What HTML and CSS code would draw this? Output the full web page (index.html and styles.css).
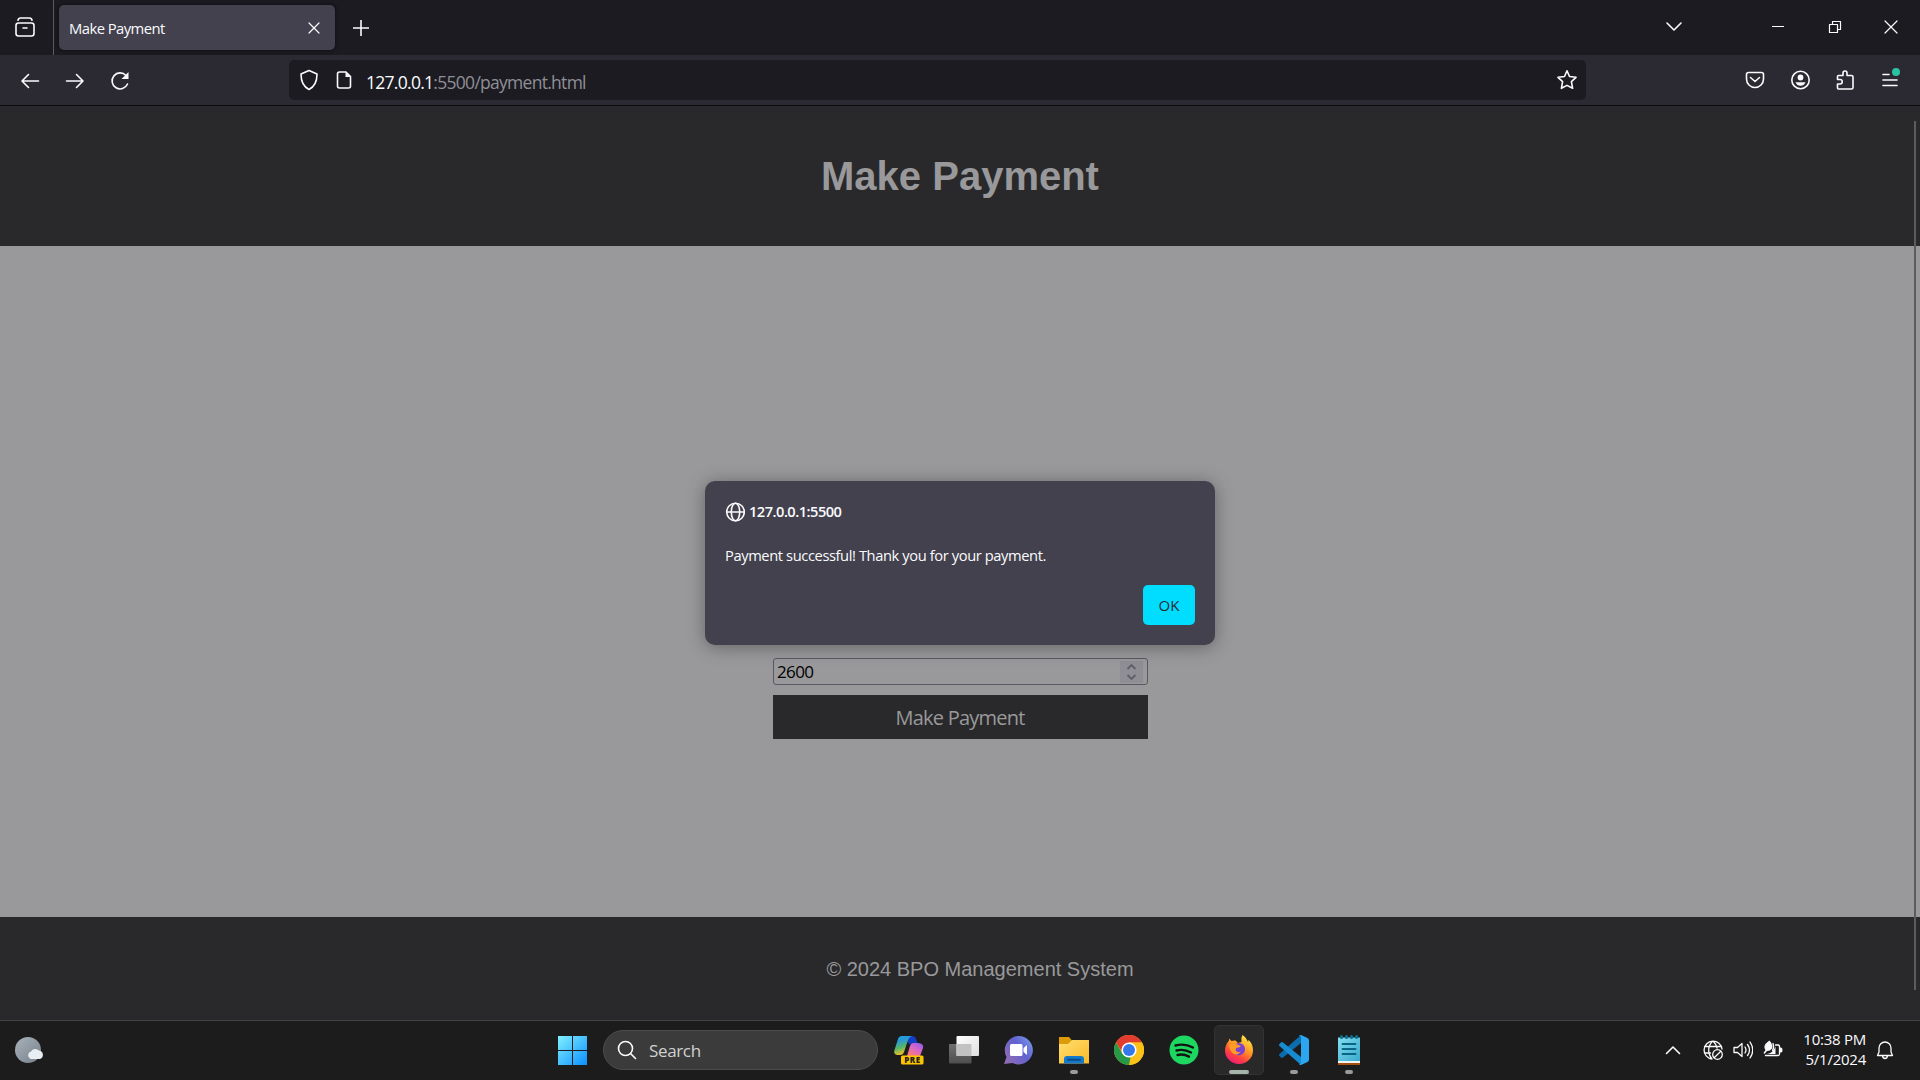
FILE: index.html
```html
<!DOCTYPE html>
<html lang="en">
<head>
<meta charset="utf-8">
<title>Make Payment</title>
<link rel="stylesheet" href="styles.css">
</head>
<body>
<div class="tabstrip">
  <div class="view-button"><svg class="ico" width="20" height="20" viewBox="0 0 20 20"><rect x="1" y="6" width="18" height="13" rx="2.500"/><path d="M3 3.200Q3.500 1 5.500 1h9Q16.500 1 17 3.200M8 11h4"/></svg></div>
  <div class="tab"><span class="tab-title">Make Payment</span><svg class="ico thin" width="12" height="12" viewBox="0 0 12 12"><path d="M1 1l10 10M11 1L1 11"/></svg></div>
  <svg class="ico new-tab" width="16" height="16" viewBox="0 0 16 16"><path d="M8 .5v15M.5 8h15"/></svg>
  <div class="window-controls">
    <svg class="ico" width="18" height="12" viewBox="0 0 18 12"><path d="M2 2l7 7 7-7"/></svg>
    <svg class="ico thin" width="12" height="14" viewBox="0 0 12 14"><path d="M0 6.500h12"/></svg>
    <svg class="ico thin" width="14" height="14" viewBox="0 0 14 14"><path d="M1.500 4.500h8v8h-8zM4.500 4V1.500h8v8H10"/></svg>
    <svg class="ico thin" width="14" height="14" viewBox="0 0 14 14"><path d="M1 1l12 12M13 1L1 13"/></svg>
  </div>
</div>
<div class="navbar">
  <div class="nav-buttons">
    <svg class="ico" width="20" height="20" viewBox="0 0 20 20"><path d="M18.500 10H2M8.500 3.500L2 10l6.500 6.500"/></svg>
    <svg class="ico" width="20" height="20" viewBox="0 0 20 20"><path d="M1.500 10H18M11.500 3.500L18 10l-6.500 6.500"/></svg>
    <svg class="ico" width="20" height="20" viewBox="0 0 20 20"><path d="M17.500 13A8 8 0 1 1 16 4.500"/><path class="solid" d="M18.500 1v7h-7z"/></svg>
  </div>
  <div class="urlbar">
    <svg class="ico" width="20" height="22" viewBox="0 0 20 22"><path d="M10 1.500l8 3.500c0 7-2 12.500-8 15.500C4 17.500 2 12 2 5z"/></svg>
    <svg class="ico" width="16" height="20" viewBox="0 0 16 20"><path d="M10 2H3.500Q1.500 2 1.500 4v12q0 2 2 2h9q2 0 2-2V6.500z"/><path class="solid" d="M9.500 2v5h5z"/></svg>
    <span class="url"><b>127.0.0.1</b>:5500/payment.html</span>
    <svg class="ico star" width="22" height="22" viewBox="0 0 22 22"><path d="M11 1.800l2.500 5.700 6.500.8-4.600 4.300 1.200 6.700L11 16.400l-5.600 2.900 1.200-6.700L2 8.300l6.500-.8z"/></svg>
  </div>
  <div class="toolbar-buttons">
    <svg class="ico" width="20" height="20" viewBox="0 0 20 20"><path d="M3.500 2.500h13q2 0 2 2V9a8.500 8.500 0 0 1-17 0V4.500q0-2 2-2zM5.500 7.500L10 11.500l4.500-4"/></svg>
    <svg class="ico" width="20" height="20" viewBox="0 0 20 20"><circle cx="10.500" cy="10" r="8.700"/><circle class="solid" cx="10.500" cy="7.500" r="2.900"/><path class="solid" d="M5.500 12.200h10q-1.500 3.500-5 3.500t-5-3.500z"/></svg>
    <svg class="ico" width="20" height="22" viewBox="0 0 20 22"><path d="M3.500 6.500H8V4a2 2 0 0 1 4 0v2.500h4.500q1.500 0 1.500 1.500v10.500q0 1.500-1.500 1.500h-13q-1 0-1-1v-4H5a2.200 2.200 0 0 0 0-4.500H2.500V7.500q0-1 1-1z"/></svg>
    <svg class="ico" width="20" height="24" viewBox="0 0 20 24"><path d="M3 6.500h6M3 12h14M3 17.500h14"/><circle class="update-dot" cx="16" cy="4" r="4"/></svg>
  </div>
</div>
<div class="page">
  <header class="page-header"><h1>Make Payment</h1></header>
  <main class="page-main">
    <div class="form">
      <div class="amount"><span>2600</span><svg class="spinner" width="23" height="22" viewBox="0 0 23 22"><path d="M7.500 8l4-4 4 4M7.500 14l4 4 4-4"/></svg></div>
      <div class="submit">Make Payment</div>
    </div>
  </main>
  <footer class="page-footer">© 2024 BPO Management System</footer>
  <div class="scroll-thumb"></div>
  <div class="dialog">
    <div class="origin"><svg class="ico" width="20" height="20" viewBox="0 0 20 20"><circle cx="10.500" cy="10" r="8.800"/><ellipse cx="10.500" cy="10" rx="4.200" ry="8.800"/><path d="M1.700 10h17.600"/></svg><span>127.0.0.1:5500</span></div>
    <div class="message"><span>Payment successful! Thank you for your payment.</span></div>
    <div class="ok"><span>OK</span></div>
  </div>
</div>
<div class="taskbar">
  <svg class="weather" width="30" height="28" viewBox="0 0 30 28"><defs><linearGradient id="moon" x2="1" y2="1"><stop stop-color="#a9b2bb"/><stop offset="1" stop-color="#77818b"/></linearGradient></defs><circle cx="13" cy="14" r="13" fill="url(#moon)"/><path fill="#e9eef2" d="M15.500 23a4 4 0 0 1 .5-7.500 5 5 0 0 1 8-1 4.400 4.400 0 0 1 1 8.500z"/></svg>
  <div class="dock">
    <svg class="start" width="30" height="30" viewBox="0 0 30 30"><defs><linearGradient id="win" x1="0" y1="0" x2="30" y2="30" gradientUnits="userSpaceOnUse"><stop stop-color="#85f3ff"/><stop offset="1" stop-color="#0b8fff"/></linearGradient></defs><path fill="url(#win)" d="M1 1h14v14H1zM16 1h14v14H16zM1 16h14v14H1zM16 16h14v14H16z"/></svg>
    <div class="search"><svg class="ico" width="20" height="20" viewBox="0 0 20 20"><circle cx="8.500" cy="8.500" r="7"/><path d="M13.500 13.500l5 5"/></svg><span>Search</span></div>
    <div class="app"><svg width="30" height="30" viewBox="0 0 30 30"><defs><linearGradient id="cpa" x2=".3" y2="1"><stop stop-color="#1ca8e8"/><stop offset=".3" stop-color="#2898d8"/><stop offset=".65" stop-color="#55b56b"/><stop offset="1" stop-color="#f0c020"/></linearGradient><linearGradient id="cpb" x1="1" x2=".2" y2="1"><stop stop-color="#8a58ef"/><stop offset=".5" stop-color="#d868c8"/><stop offset="1" stop-color="#ff7a70"/></linearGradient></defs><path fill="#123fc4" d="M9 1h9q3 0 4 3l1.500 4H19q-2 0-3 2z"/><path fill="url(#cpa)" d="M8 1h10q-3 1-4 4l-4 12q-1 3-4 3H3q-4-1-2.500-5L4 4Q5 1 8 1z"/><path fill="url(#cpb)" d="M19 8h6q5 1 4 5l-3 8H13l3-10q1-3 3-3z"/><rect x="7" y="20.500" width="22.500" height="9" rx="1.500" fill="#ffc400"/><text class="badge" x="18.400" y="27.900" text-anchor="middle">PRE</text></svg></div>
    <div class="app"><svg width="30" height="30" viewBox="0 0 30 30"><defs><linearGradient id="tva" x2="0" y2="1"><stop stop-color="#707070"/><stop offset="1" stop-color="#4e4e4e"/></linearGradient><linearGradient id="tvb" x2="1" y2="1"><stop stop-color="#fff"/><stop offset="1" stop-color="#dedede"/></linearGradient></defs><rect y="9" width="22.500" height="19.500" rx="1" fill="url(#tva)"/><rect x="7.500" y="1" width="22.500" height="20" rx="1" fill="url(#tvb)"/><path fill="#c2c2c2" d="M7.500 9h15v12h-15z"/></svg></div>
    <div class="app"><svg width="30" height="30" viewBox="0 0 30 30"><defs><linearGradient id="chat" x1="1" x2="0" y2=".7"><stop stop-color="#7ba0ed"/><stop offset=".5" stop-color="#6262cf"/><stop offset="1" stop-color="#8d6bb5"/></linearGradient></defs><path fill="url(#chat)" d="M14.500 1a14.200 14.200 0 1 1-6 27L0 29l2.500-7A14.200 14.200 0 0 1 14.500 1z"/><rect x="6" y="9" width="12.500" height="12" rx="1.500" fill="#fff"/><path fill="#fff" d="M19.500 13l3.500-3v10l-3.500-3z"/></svg></div>
    <div class="app running"><svg width="30" height="30" viewBox="0 0 30 30"><defs><linearGradient id="fold" x2="1" y2="1"><stop stop-color="#ffdf70"/><stop offset="1" stop-color="#fbb92a"/></linearGradient></defs><path fill="#dc9c08" d="M0 2h10l3 3.500V12H0z"/><path fill="url(#fold)" d="M0 9h9l4-4h17v23.500H0z"/><path fill="#1479c8" d="M5 28.500V24q0-3 3-3h14q3 0 3 3v4.500z"/><rect x="8" y="23.700" width="14" height="2" rx="1" fill="#0a4b87"/></svg></div>
    <div class="app"><svg width="30" height="30" viewBox="0 0 30 30"><circle cx="15" cy="15" r="15" fill="#fbc116"/><path fill="#e33b2e" d="M2 7.500a15 15 0 0 1 26 0H15L9 18.500z"/><path fill="#279847" d="M2 7.500l6.500 11.250 8 3.700L15 30A15 15 0 0 1 2 7.500z"/><path fill="#fbc116" d="M15 7.500h13A15 15 0 0 1 15 30l6.500-11.200z"/><circle cx="15" cy="15" r="7.600" fill="#fff"/><circle cx="15" cy="15" r="6" fill="#3479ea"/></svg></div>
    <div class="app"><svg width="30" height="30" viewBox="0 0 30 30"><circle cx="15" cy="15" r="14.500" fill="#1ed760"/><path class="waves" d="M6.500 10.500q9-2.500 17.500 2M7.500 15.500q7.500-2 14.500 2M8.500 20q6-1.500 11.500 1.600"/></svg></div>
    <div class="app running active"><svg width="30" height="30" viewBox="0 0 30 30"><defs><linearGradient id="fox" x1=".85" x2=".3" y2="1"><stop stop-color="#fff04a"/><stop offset=".45" stop-color="#ff9a22"/><stop offset=".75" stop-color="#ff4142"/><stop offset="1" stop-color="#ee1a78"/></linearGradient></defs><path fill="url(#fox)" d="M18.500 0c4 3 4.500 5 5.500 7q.5-1 .3-2.200C28 8 29 12 29 15.500a14 13.500 0 0 1-28 0C1 11 3 8 5 5.500V3.500l2.500 2.500q2.500-.8 4-.5L14 8l3.500-1q-1-4 1-7z"/><circle cx="14.800" cy="14.200" r="6.200" fill="#7a40d2"/><path fill="#ff9c25" d="M5 10q3-2 7-1l5 2q-1 1.500-4 1.700-2 .8-1 3.300 2 2 5 .5-3 4-7 2.500Q6 17 5 10z"/></svg></div>
    <div class="app running"><svg width="30" height="30" viewBox="0 0 30 30"><path fill="#0b6cae" d="M22 0v8L4 22.500q-1 .8-2 0L.5 21q-1-1 0-2z"/><path fill="#168bd2" d="M22 30v-8L4 7.500q-1-.8-2 0L.5 9q-1 1 0 2z"/><path fill="#2da6f2" d="M22 0l6.500 3q1.500.8 1.500 2.500v19q0 1.700-1.500 2.500L22 30q-1.500 0-2-1 2 .5 2-2V3q0-2.500-2-2 .5-1 2-1z"/></svg></div>
    <div class="app running"><svg width="30" height="30" viewBox="0 0 30 30"><defs><linearGradient id="note" x2="1" y2="1"><stop stop-color="#84def0"/><stop offset="1" stop-color="#38a9cd"/></linearGradient></defs><path fill="#a44e10" d="M4 26h22v4H4z"/><path fill="#f3f3f3" d="M4 24h22v4H4z"/><path fill="url(#note)" d="M4 2.500h22V26H4z"/><path stroke="#086583" stroke-width="1.800" stroke-linecap="round" d="M8.500 9h13M8.500 14h13M8.500 19h13"/><path stroke="#0b6f91" stroke-width="3" stroke-linecap="round" d="M7.500 1.500v1M12.500 1.500v1M17.500 1.500v1M22.500 1.500v1"/></svg></div>
  </div>
  <div class="tray">
    <svg class="ico" width="16" height="10" viewBox="0 0 16 10"><path d="M1.500 8.500L8 2l6.500 6.500"/></svg>
    <div class="status">
      <svg class="ico tray-ico" width="20" height="20" viewBox="0 0 20 20"><path d="M9 19A9 9 0 1 1 19 9M1.500 6.500h17M1.500 13h6M9 19C4 13 5 5 10 1c2 2 3.500 4 4 7"/><circle cx="14.500" cy="14.500" r="4.800"/><path d="M11.200 17.800l6.600-6.600"/></svg>
      <svg class="ico tray-ico" width="20" height="20" viewBox="0 0 20 20"><path d="M1 7.500h3.500L9 3.500v13l-4.500-4H1zM12 7q2 3 0 6M14.500 4.500q4 5.500 0 11M17 2q5.500 8 0 16"/></svg>
      <svg class="ico tray-ico" width="20" height="20" viewBox="0 0 20 20"><path d="M12.500 5H15q1.500 0 1.500 1.500V14q0 1.500-1.500 1.500H2.500"/><path class="solid" d="M16.500 7.500H18q1.500 0 1.500 2.500T18 12.500h-1.500zM6.500.5Q10.500 4.500 9 8.500 7.500 11 4 11L1.500 14 .5 13l2-3Q-1 5.500 6.500.5z"/><path class="solid" d="M12.500 6.500v7.500H4Q10 13 12.500 6.500z"/><path d="M10 3.500q1.500 4-.5 7"/></svg>
    </div>
    <div class="clock"><span class="time">10:38 PM</span><span class="date">5/1/2024</span></div>
    <svg class="ico tray-ico" width="18" height="20" viewBox="0 0 18 20"><path d="M1.500 15.500L3 12V8a6 6 0 0 1 12 0v4l1.500 3.500zM6.500 16q.5 2.500 2.500 2.500t2.500-2.500"/></svg>
  </div>
</div>
</body>
</html>
```

FILE: styles.css
```css
* { box-sizing: border-box; }
body {
  margin: 0;
  height: 1080px;
  overflow: hidden;
  display: flex;
  flex-direction: column;
  font-family: "Open Sans", "Noto Sans", sans-serif;
  font-size: 15px;
  color: #fbfbfe;
  background: #1c1b22;
  white-space: nowrap;
}
svg { display: block; flex: none; }
.ico { fill: none; stroke: #fbfbfe; stroke-width: 1.6; stroke-linecap: round; stroke-linejoin: round; }
.thin { stroke-width: 1.2; }
.ico .solid { fill: #fbfbfe; stroke: none; }
.ico .update-dot { fill: #2ac3a2; stroke: none; }

.tabstrip { height: 55px; flex: none; display: flex; align-items: center; background: #1c1b22; }
.view-button { width: 54px; height: 55px; padding: 17px 0 0 15px; border-right: 1px solid #5b5a62; }
.tab {
  width: 276px; height: 45px; margin-left: 5px; padding: 0 15px 0 10px;
  display: flex; align-items: center; justify-content: space-between;
  background: #42414d; border-radius: 5px; box-shadow: 0 0 4px #0a0a0e;
}
.tab-title { font-size: 14.800px; letter-spacing: -0.550px; }
.new-tab { margin-left: 18px; }
.window-controls { margin-left: auto; padding: 0 22px 2px 0; display: flex; align-items: center; }
.window-controls svg { margin-left: 42px; }
.window-controls svg:nth-child(2) { margin-left: 89px; }
.window-controls svg:nth-child(3) { margin-left: 44px; }

.navbar { height: 51px; flex: none; display: flex; align-items: center; background: #2b2a33; border-bottom: 1px solid #0c0c0d; }
.nav-buttons { width: 289px; padding: 2px 0 0 20px; display: flex; gap: 25px; }
.urlbar { width: 1297px; height: 40px; padding: 0 8px 0 10px; display: flex; align-items: center; background: #1c1b22; border-radius: 5px; }
.urlbar svg:nth-child(2) { margin-left: 17px; }
.url { margin-left: 14px; padding-top: 4px; font-size: 17.500px; letter-spacing: -0.720px; color: #8f8f96; }
.url b { font-weight: 400; color: #fbfbfe; }
.star { margin-left: auto; }
.toolbar-buttons { margin-left: auto; padding-right: 20px; display: flex; align-items: center; gap: 25px; }

.page { position: relative; height: 914px; flex: none; display: flex; flex-direction: column; }
.page-header { height: 140px; display: flex; align-items: center; justify-content: center; background: #29292b; color: #99999b; }
.page-header h1 { margin: 0; font: bold 40px/46px "Liberation Sans", Arial, sans-serif; }
.page-main { height: 671px; padding-top: 412px; background: #99999b; }
.form { width: 375px; margin: 0 auto 0 773px; display: flex; flex-direction: column; gap: 10px; }
.amount {
  height: 27px; padding: 0 4px 0 3px; display: flex; align-items: center; justify-content: space-between;
  border: 1px solid #5a5963; border-radius: 3px; color: #000; font-size: 17px; letter-spacing: -0.600px;
}
.spinner { background: #8f8e95; fill: none; stroke: #5f5e69; stroke-width: 1.8; }
.submit { height: 44px; line-height: 45px; padding-right: 1px; text-align: center; background: #29292b; color: #99999b; font-size: 20px; letter-spacing: -0.780px; }
.page-footer { height: 103px; padding: 1px 0 0 40px; display: flex; align-items: center; justify-content: center; background: #29292b; color: #99999b; font: 20px "Liberation Sans", Arial, sans-serif; }
.scroll-thumb { position: absolute; left: 1914px; top: 15px; width: 2px; height: 869px; background: #5c5c5e; }

.dialog {
  position: absolute; left: 705px; top: 375px; width: 510px; height: 164px; padding: 20px;
  display: flex; flex-direction: column;
  background: #42414d; border-radius: 10px; box-shadow: 0 2px 18px rgba(0, 0, 0, 0.350);
}
.origin { height: 21px; display: flex; align-items: center; gap: 4px; line-height: 20px; font-size: 14.600px; font-weight: 600; letter-spacing: -0.500px; }
.origin span { padding-bottom: 1px; }
.message { margin-top: 22px; line-height: 22px; font-size: 14.700px; letter-spacing: -0.400px; }
.ok { width: 52px; height: 40px; margin: 19px 0 0 auto; line-height: 41px; text-align: center; background: #00ddff; color: #2b2a33; border-radius: 5px; }

.taskbar { height: 60px; flex: none; padding-bottom: 1px; display: flex; align-items: center; background: #1c1c1c; border-top: 1px solid #414141; }
.weather { margin-left: 15px; }
.dock { margin-left: 512px; display: flex; align-items: center; }
.search {
  width: 275px; height: 40px; margin: 0 6px 0 16px; padding-left: 13px; display: flex; align-items: center; gap: 12px;
  background: #3b3b3b; border: 1px solid #4c4c4c; border-radius: 20px; color: #d0d0d0; font-size: 17px; letter-spacing: -0.350px;
}
.app { position: relative; width: 50px; height: 50px; margin-right: 5px; display: flex; align-items: center; justify-content: center; border-radius: 5px; }
.app.active { background: #292929; border: 1px solid #333; }
.running::after { content: ""; position: absolute; left: 21px; bottom: 1px; width: 8px; height: 4px; border-radius: 2px; background: #9a9a9a; }
.active::after { left: 14px; bottom: 0; width: 20px; background: #a6b5ab; }
.badge { font: 800 8px "Open Sans", sans-serif; letter-spacing: 0.400px; fill: #222; }
.waves { fill: none; stroke: #10150f; stroke-width: 2.4; stroke-linecap: round; }
.tray { margin-left: auto; padding-right: 26px; display: flex; align-items: center; }
.tray-ico { stroke-width: 1.3; }
.status { margin-left: 22px; display: flex; gap: 10px; }
.clock { width: 83px; margin-right: 10px; padding-bottom: 3px; display: flex; flex-direction: column; align-items: flex-end; line-height: 20px; font-size: 15px; letter-spacing: -0.250px; }
```
